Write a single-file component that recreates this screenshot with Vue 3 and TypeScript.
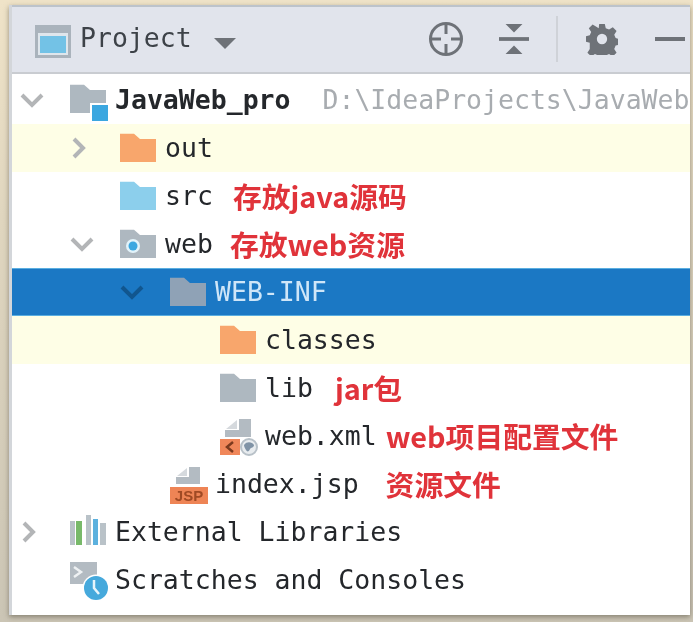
<script setup lang="ts">
type IconId = 'module' | 'out' | 'src' | 'web' | 'grey' | 'xml' | 'jsp' | 'libs' | 'scratch'

interface TreeRow {
  depth: number
  arrow?: 'open' | 'closed'
  icon: IconId
  name: string
  path?: string
  note?: string
  noteGap?: number
  kind?: 'excluded' | 'selected' | 'root'
}

const rows: TreeRow[] = [
  { depth: 0, arrow: 'open', icon: 'module', name: 'JavaWeb_pro', path: 'D:\\IdeaProjects\\JavaWeb', kind: 'root' },
  { depth: 1, arrow: 'closed', icon: 'out', name: 'out', kind: 'excluded' },
  { depth: 1, icon: 'src', name: 'src', note: '存放java源码', noteGap: 20 },
  { depth: 1, arrow: 'open', icon: 'web', name: 'web', note: '存放web资源', noteGap: 17 },
  { depth: 2, arrow: 'open', icon: 'grey', name: 'WEB-INF', kind: 'selected' },
  { depth: 3, icon: 'out', name: 'classes', kind: 'excluded' },
  { depth: 3, icon: 'grey', name: 'lib', note: 'jar包', noteGap: 22 },
  { depth: 3, icon: 'xml', name: 'web.xml', note: 'web项目配置文件', noteGap: 9 },
  { depth: 2, icon: 'jsp', name: 'index.jsp', note: '资源文件', noteGap: 27 },
  { depth: 0, arrow: 'closed', icon: 'libs', name: 'External Libraries' },
  { depth: 0, icon: 'scratch', name: 'Scratches and Consoles' },
]

const folderPath = 'M0 1h14l6 6h16v27H0z'
</script>

<template>
  <div class="frame">
    <section class="panel">
      <header class="toolbar">
        <svg class="window-icon" width="36" height="33" viewBox="0 0 36 33">
          <rect width="36" height="33" fill="#aab3bc" />
          <rect x="3" y="8" width="30" height="22" fill="#dfe6ec" />
          <rect x="5" y="11" width="26" height="17" fill="#73c2e6" />
        </svg>
        <span class="toolbar__title">Project</span>
        <span class="toolbar__caret" />
        <div class="toolbar__actions">
          <svg width="36" height="36" viewBox="0 0 36 36" fill="none" stroke="#6e7278" stroke-width="3">
            <circle cx="18" cy="18" r="15.500" />
            <path d="M18 2v11M18 23v11M2 18h11M23 18h11" />
          </svg>
          <svg class="collapse" width="30" height="34" viewBox="0 0 32 34" fill="#6e7278">
            <path d="M7 1h18l-9 9zM16 24l9 9H7z" />
            <rect y="15" width="32" height="4" />
          </svg>
          <span class="toolbar__sep" />
          <svg class="gear" width="32" height="32" viewBox="0 0 34 34" fill="#6e7278">
            <path
              fill-rule="evenodd"
              d="M14 1h6l1 4.500 3.500 1.500 4-2.500 4 4-2.500 4 1.500 3.500 4 1v6l-4 1-1.500 3.500 2.500 4-4 4-4-2.500-3.500 1.500-1 4h-6l-1-4-3.500-1.500-4 2.500-4-4 2.500-4L4 21l-4-1v-6l4-1 1.500-3.500-2.500-4 4-4 4 2.500L13.500 5.500zM17 11.500a5.500 5.500 0 1 0 0 11 5.500 5.500 0 0 0 0-11z"
            />
          </svg>
          <span class="toolbar__minus" />
        </div>
      </header>

      <ul class="tree">
        <li
          v-for="row in rows"
          :key="row.name"
          class="row"
          :class="row.kind ? `row--${row.kind}` : ''"
          :style="{ paddingLeft: `${8 + row.depth * 50}px` }"
        >
          <span class="row__arrow">
            <svg v-if="row.arrow === 'open'" width="24" height="15" viewBox="0 0 24 15" fill="none" stroke="currentColor" stroke-width="4">
              <path d="M2 2l10 10L22 2" />
            </svg>
            <svg v-else-if="row.arrow === 'closed'" class="row__arrow-closed" width="14" height="22" viewBox="0 0 14 22" fill="none" stroke="currentColor" stroke-width="4">
              <path d="M2 2l9 9-9 9" />
            </svg>
          </span>

          <svg class="row__icon" width="38" height="38" viewBox="0 0 38 38">
            <g v-if="row.icon === 'module'">
              <path :d="folderPath" transform="translate(0 3) scale(1 .85)" fill="#aeb8c0" />
              <rect x="20" y="22" width="18" height="18" fill="#fff" />
              <rect x="22" y="24" width="16" height="16" fill="#3ba7e0" />
            </g>
            <path v-else-if="row.icon === 'out'" :d="folderPath" transform="translate(0 4) scale(1 .85)" fill="#f8a66c" />
            <path v-else-if="row.icon === 'src'" :d="folderPath" transform="translate(0 4) scale(1 .85)" fill="#8ccfec" />
            <g v-else-if="row.icon === 'web'">
              <path :d="folderPath" transform="translate(0 4) scale(1 .85)" fill="#aeb8c0" />
              <circle cx="13" cy="21" r="7" fill="#e2f3fa" />
              <circle cx="13" cy="21" r="4.500" fill="#3ba7e0" />
            </g>
            <path
              v-else-if="row.icon === 'grey'"
              :d="folderPath"
              transform="translate(0 4) scale(1 .85)"
              :fill="row.kind === 'selected' ? '#8fa2b6' : '#aeb8c0'"
            />
            <g v-else-if="row.icon === 'xml'">
              <path d="M19 2h12v18H5v-7h14z" fill="#b3bbc2" />
              <path d="M17 3v9H6z" fill="#d5d9dd" />
              <rect y="22" width="20" height="16" fill="#f0875a" />
              <path d="M13 25l-6 5 6 5" fill="none" stroke="#7c3a1e" stroke-width="2.500" />
              <circle cx="29" cy="30" r="8" fill="#e8ecef" stroke="#b8c1c8" stroke-width="2" />
              <path d="M24 28c3-4 8-3 10 0 0 3-3 2-4 4-1 3-3 3-4 1-1-2-2-3-2-5z" fill="#8093a6" />
            </g>
            <g v-else-if="row.icon === 'jsp'">
              <path d="M19 2h11v17H6v-7h13z" fill="#b3bbc2" />
              <path d="M17 3v8H7z" fill="#d5d9dd" />
              <rect y="22" width="38" height="17" fill="#ee8455" />
              <text x="19" y="36" class="row__jsp" text-anchor="middle">JSP</text>
            </g>
            <g v-else-if="row.icon === 'libs'">
              <rect y="8" width="5" height="24" fill="#b9c2c8" />
              <rect x="6" y="8" width="6" height="24" fill="#78b96a" />
              <rect x="16" y="2" width="5" height="30" fill="#b9c2c8" />
              <rect x="23" y="6" width="5" height="26" fill="#5cb1de" />
              <rect x="30" y="10" width="6" height="22" fill="#b9c2c8" />
            </g>
            <g v-else>
              <rect y="1" width="27" height="22" fill="#b3bbc2" />
              <path d="M4 6l7 5-7 5" fill="none" stroke="#eef1f3" stroke-width="2.500" />
              <circle cx="26" cy="27" r="13.500" fill="#fff" />
              <circle cx="26" cy="27" r="12" fill="#46a9dc" />
              <path d="M24 19v8l5 6" fill="none" stroke="#e8f5fb" stroke-width="2.500" />
            </g>
          </svg>

          <span class="row__name">{{ row.name }}</span>
          <span v-if="row.path" class="row__path">{{ row.path }}</span>
          <span v-if="row.note" class="row__note" :style="{ marginLeft: `${row.noteGap}px` }">{{ row.note }}</span>
        </li>
      </ul>
    </section>
  </div>
</template>

<style>
html,
body {
  margin: 0;
  background: #d8d1bf;
}
</style>

<style scoped>
.frame {
  box-sizing: border-box;
  width: 693px;
  height: 622px;
  padding: 5px 3px 7px 9px;
  overflow: hidden;
  background: linear-gradient(180deg, #efe3c8 0%, #e0d6bf 35%, #cbc5b5 100%);
  filter: blur(0.7px);
}

.panel {
  height: 100%;
  overflow: hidden;
  background: #fff;
  border-left: 3px solid #d3d6da;
  box-shadow: 0 2px 5px rgba(90, 85, 70, 0.6);
  font-family: "DejaVu Sans Mono", "Liberation Mono", monospace;
  color: #24272b;
}

.toolbar {
  display: flex;
  align-items: center;
  box-sizing: border-box;
  height: 69px;
  padding: 0 5px 0 23px;
  background: #e1e4ec;
  border-top: 2px solid #bcc3cb;
  border-bottom: 2px solid #c9ccd1;
}

.window-icon {
  flex-shrink: 0;
  margin-top: 4px;
}

.toolbar__title {
  margin-left: 9px;
  margin-bottom: 3px;
  font-size: 26.5px;
  line-height: 30px;
  color: #3d4248;
}

.toolbar__caret {
  width: 0;
  height: 0;
  margin: 8px 0 0 22px;
  border-left: 11px solid transparent;
  border-right: 11px solid transparent;
  border-top: 11px solid #6e7278;
}

.toolbar__actions {
  display: flex;
  align-items: center;
  margin-left: auto;
  padding-bottom: 1px;
}

.collapse {
  margin-left: 35px;
}

.toolbar__sep {
  width: 2px;
  height: 46px;
  margin-left: 27px;
  background: #cfd2d8;
}

.gear {
  margin-left: 28px;
}

.toolbar__minus {
  width: 30px;
  height: 4px;
  margin-left: 37px;
  background: #6e7278;
}

.tree {
  margin: 0;
  padding: 2px 0 0;
  list-style: none;
}

.row {
  display: flex;
  align-items: center;
  height: 48px;
  box-sizing: border-box;
  white-space: nowrap;
  overflow: hidden;
  font-size: 26.5px;
  color: #24272b;
}

.row--excluded {
  background: #fefee6;
}

.row--selected {
  background: #1b78c4;
  border-top: 1px solid #5aaee0;
  border-bottom: 1px solid #5aaee0;
  color: #cfe6f8;
}

.row__arrow {
  display: flex;
  flex-shrink: 0;
  align-items: center;
  width: 26px;
  margin-right: 24px;
  color: #b3b5b7;
}

.row__arrow-closed {
  margin-left: 2px;
}

.row--selected .row__arrow {
  color: #11568f;
}

.row__icon {
  flex-shrink: 0;
  margin-right: 7px;
  overflow: visible;
}

.row__jsp {
  font-family: "Liberation Sans", sans-serif;
  font-size: 15px;
  font-weight: 700;
  fill: #a04a24;
}

.row__name {
  margin-top: -2px;
}

.row--root .row__name {
  font-weight: 700;
}

.row__path {
  margin: -2px 0 0 32px;
  color: #a8acb0;
}

.row__note {
  font-family: "Noto Sans CJK SC", "Liberation Sans", sans-serif;
  font-size: 28.8px;
  font-weight: 700;
  line-height: 1;
  color: #e0333a;
}
</style>
